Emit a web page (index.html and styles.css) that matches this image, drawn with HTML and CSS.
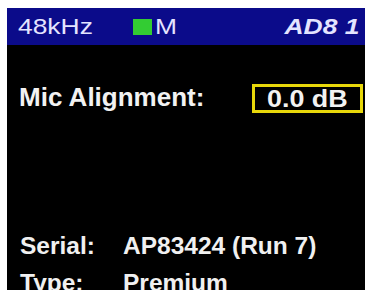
FILE: index.html
```html
<!DOCTYPE html>
<html>
<head>
<meta charset="utf-8">
<link rel="stylesheet" href="styles.css">
</head>
<body>
<div class="screen">
  <div class="header">
    <span class="rate"><span class="wide">48kHz</span></span>
    <span class="mode"><span class="led"></span><span class="wide">M</span></span>
    <span class="dev">AD8 1</span>
  </div>
  <div class="mic">
    <span class="mic-label">Mic Alignment:</span>
    <span class="mic-value"><span class="wide">0.0 dB</span></span>
  </div>
  <div class="info">
    <div class="row"><span class="key">Serial:</span><span class="val">AP83424 (Run 7)</span></div>
    <div class="row"><span class="key">Type:</span><span class="val">Premium</span></div>
  </div>
</div>
</body>
</html>
```
FILE: styles.css
```css
html, body {
  margin: 0;
  padding: 0;
  background: #ffffff;
}
body {
  font-family: "Liberation Sans", Arial, sans-serif;
}
.screen {
  margin: 8px 3px 0 7px;
  height: 282px;
  background: #000000;
  overflow: hidden;
}
.header {
  height: 37px;
  background: #0b0b8a;
  display: flex;
  align-items: center;
  padding: 0 6px 0 11px;
  color: #e4e4ff;
  font-size: 22px;
  line-height: 26px;
}
.wide {
  display: inline-block;
  transform: scaleX(1.2);
  transform-origin: left center;
}
.rate {
  width: 115px;
}
.mode {
  display: flex;
  align-items: center;
}
.led {
  display: inline-block;
  width: 19px;
  height: 16px;
  background: #33cc33;
  margin-right: 3px;
}
.dev {
  margin-left: auto;
  font-weight: bold;
  font-style: italic;
  display: inline-block;
  transform: scaleX(1.2);
  transform-origin: right center;
}
.mic {
  margin-top: 36px;
  display: flex;
  align-items: center;
  padding: 0 2px 0 12px;
  height: 32px;
}
.mic-label {
  color: #f2f2f2;
  font-weight: bold;
  font-size: 26px;
  line-height: 30px;
}
.mic-value {
  margin-left: auto;
  margin-top: 3px;
  width: 87px;
  border: 3px solid #e8d80a;
  color: #f2f2f2;
  font-weight: bold;
  font-size: 24px;
  line-height: 23px;
  padding: 0 6px 0 12px;
}
.mic-value .wide {
  transform: scaleX(1.12);
}
.info {
  margin-top: 114px;
  padding-left: 13px;
}
.row {
  display: flex;
  font-weight: bold;
  font-size: 24.5px;
  line-height: 37px;
  color: #f0f0f0;
}
.key {
  width: 103px;
}
```
